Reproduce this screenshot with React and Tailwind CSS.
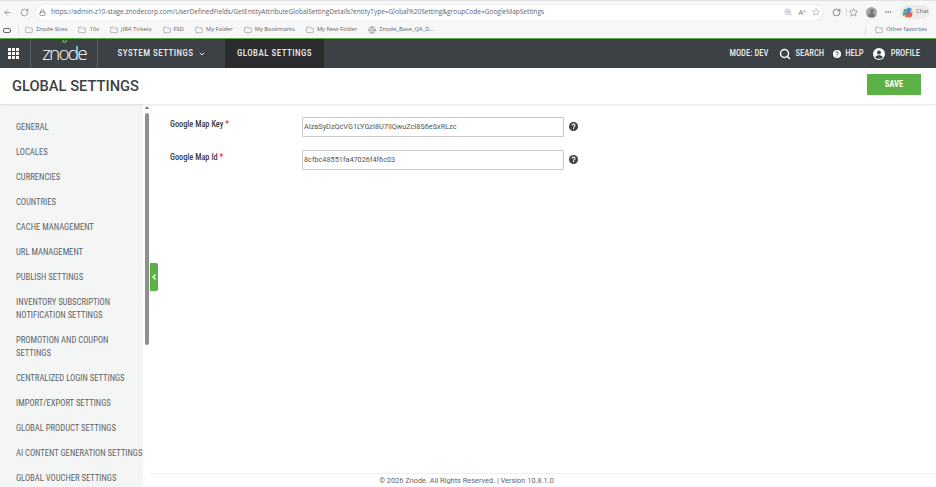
import React from 'react';
import { ArrowLeft, RotateCw, Lock, Folder, Globe, ZoomIn, Star, ChevronDown, ChevronLeft, Search, MoreHorizontal } from 'lucide-react';

const bookmarks = ['Znode Sites', '10x', 'JIRA Tickets', 'FSD', 'My Folder', 'My Bookmarks', 'My New Folder'];

const menu = [
  { label: 'GENERAL', h: 'h-[25px]' },
  { label: 'LOCALES', h: 'h-[25px]' },
  { label: 'CURRENCIES', h: 'h-[25px]' },
  { label: 'COUNTRIES', h: 'h-[25px]' },
  { label: 'CACHE MANAGEMENT', h: 'h-[25px]' },
  { label: 'URL MANAGEMENT', h: 'h-[25px]' },
  { label: 'PUBLISH SETTINGS', h: 'h-[25px]' },
  { label: 'INVENTORY SUBSCRIPTION NOTIFICATION SETTINGS', h: 'h-[38px]' },
  { label: 'PROMOTION AND COUPON SETTINGS', h: 'h-[38px]' },
  { label: 'CENTRALIZED LOGIN SETTINGS', h: 'h-[25px]' },
  { label: 'IMPORT/EXPORT SETTINGS', h: 'h-[25px]' },
  { label: 'GLOBAL PRODUCT SETTINGS', h: 'h-[25px]' },
  { label: 'AI CONTENT GENERATION SETTINGS', h: 'h-[25px]' },
  { label: 'GLOBAL VOUCHER SETTINGS', h: 'h-[25px]' },
];

const fields = [
  { label: 'Google Map Key', value: 'AIzaSyDzQcVG1LYGzI8U7IlQwuZcI8S6eSxRLzc' },
  { label: 'Google Map Id', value: '8cfbc48551fa47026f4f6c03' },
];

const HelpDot = ({ className, mark }) => (
  <svg viewBox="0 0 16 16" className={className}>
    <circle cx="8" cy="8" r="8" fill="currentColor" />
    <path d="M5.4 6.2a2.6 2.4 0 1 1 3.9 2.1c-.9.5-1.3.9-1.3 1.7" fill="none" stroke={mark} strokeWidth="1.9" />
    <rect x="7" y="11" width="2" height="2" fill={mark} />
  </svg>
);

const ProfileDot = ({ className }) => (
  <svg viewBox="0 0 16 16" className={className}>
    <circle cx="8" cy="8" r="8" fill="currentColor" />
    <circle cx="8" cy="6" r="2.6" fill="#3c4145" />
    <path d="M3 12.2c1-2 3-2.7 5-2.7s4 .7 5 2.7C12 13.6 10 14.4 8 14.4s-4-.8-5-2.2z" fill="#3c4145" />
  </svg>
);

const GridIcon = () => (
  <svg viewBox="0 0 11 11" className="mr-[4px] h-[11px] w-[11px]" fill="#fff">
    {[0, 4, 8].map((y) =>
      [0, 4, 8].map((x) => <rect key={`${x}-${y}`} x={x} y={y} width="3" height="3" />)
    )}
  </svg>
);

const ZnodeLogo = () => (
  <span className="relative block font-['Open_Sans',sans-serif] text-[19px] font-light font-stretch-[100%] leading-none tracking-[-1.8px] text-white">
    zn
    <span className="relative">
      o
      <svg viewBox="0 0 8 6" className="absolute left-[3px] top-[-1px] h-[5px] w-[7px]">
        <path d="M1 1c2 0 3 1 3 4 0-2 1-4 3-4 0 2-1 4-3 4C2 5 1 3 1 1z" fill="#5cb341" />
      </svg>
    </span>
    de
  </span>
);

const CopilotDot = () => (
  <svg viewBox="0 0 16 16" className="h-[11px] w-[11px]">
    <path d="M8 1h4a3 3 0 0 1 2 3L11 9 6 6z" fill="#4a8fe0" />
    <path d="M3 3h5L5 12l-3 1a2 2 0 0 1-1-2z" fill="#3fb98a" />
    <path d="M5 9h6l4-3v5a4 4 0 0 1-4 4H5z" fill="#e8663c" />
    <path d="M8 6h3l-1 5H5z" fill="#b04fc4" />
  </svg>
);

export default function App() {
  return (
    <div className="flex h-[487px] w-[936px] flex-col overflow-hidden bg-white font-['Roboto',sans-serif]">
      {/* Barre du navigateur */}
      <div className="flex h-[22px] shrink-0 items-center border-t border-[#e2e2e2] bg-[#f7f7f7] pl-[2px] pr-[6px] pt-[1px] text-[#5f6368]">
        <ArrowLeft className="ml-[1px] h-[9px] w-[9px]" strokeWidth={1.5} />
        <RotateCw className="ml-[8px] h-[9px] w-[9px]" strokeWidth={1.5} />
        <div className="ml-[6px] flex h-[15px] w-[788px] items-center rounded-full bg-white pl-[4px] pr-[3px] shadow-[0_0_1px_rgba(0,0,0,0.25)]">
          <Lock className="h-[7px] w-[7px]" strokeWidth={2} />
          <span className="ml-[5px] font-['Open_Sans',sans-serif] text-[6.56px] leading-none whitespace-nowrap text-[#5f6570]">
            https://admin-z10-stage.znodecorp.com/UserDefinedFields/GetEntityAttributeGlobalSettingDetails?entityType=Global%20Setting&groupCode=GoogleMapSettings
          </span>
          <div className="ml-auto flex items-center gap-[6px] text-[#777]">
            <ZoomIn className="h-[8px] w-[8px]" strokeWidth={1.3} />
            <span className="font-['Open_Sans',sans-serif] text-[7px] leading-none">Aᴬ</span>
            <Star className="h-[8px] w-[8px]" strokeWidth={1.3} />
          </div>
        </div>
        <RotateCw className="ml-[9px] h-[9px] w-[9px]" strokeWidth={2} />
        <span className="ml-[5px] h-[8px] w-px bg-[#ddd]" />
        <Star className="ml-[2px] h-[9px] w-[9px]" strokeWidth={1.5} />
        <span className="relative ml-[8px] h-[11px] w-[11px] rounded-full bg-[#a8a8a8]">
          <span className="absolute left-[3.5px] top-[2px] h-[4px] w-[4px] rounded-full bg-[#777]" />
          <span className="absolute left-[2px] top-[6.5px] h-[3.5px] w-[7px] rounded-t-full bg-[#777]" />
        </span>
        <MoreHorizontal className="ml-[7px] h-[8px] w-[8px]" strokeWidth={2} />
        <div className="ml-[8px] flex h-[14px] w-[30px] items-center gap-[3px] rounded-full bg-[#ececec] pl-[2px]">
          <CopilotDot />
          <span className="font-['Open_Sans',sans-serif] text-[5.8px] leading-none">Chat</span>
        </div>
      </div>

      {/* Favoris */}
      <div className="flex h-[16px] shrink-0 items-center bg-[#f7f7f7] pl-[3px] pr-[9px] font-['Open_Sans',sans-serif] text-[5.8px] font-stretch-[90%] leading-none text-[#5f6368]">
        <span className="h-[5px] w-[8px] rounded-[2px] border border-[#666]" />
        <span className="ml-[7px] mr-[6px] h-[8px] w-px bg-[#ddd]" />
        <div className="flex items-center gap-[11px]">
          {bookmarks.map((b) => (
            <span key={b} className="flex items-center gap-[3px] whitespace-nowrap">
              <Folder className="h-[8px] w-[8px]" strokeWidth={1.3} />
              {b}
            </span>
          ))}
          <span className="flex items-center gap-[3px] whitespace-nowrap">
            <Globe className="h-[8px] w-[8px]" strokeWidth={1.3} />
            Znode_Base_QA_D...
          </span>
        </div>
        <span className="ml-auto mr-[9px] h-[8px] w-px bg-[#ddd]" />
        <span className="flex items-center gap-[3px] whitespace-nowrap">
          <Folder className="h-[8px] w-[8px]" strokeWidth={1.3} />
          Other favorites
        </span>
      </div>

      {/* En-tête de l'application */}
      <header className="flex h-[30px] shrink-0 items-stretch border-t border-[#5cab45] bg-[#3c4145] text-[9px] font-medium font-stretch-[85%] text-[#e8e8e8]">
        <div className="flex w-[31px] items-center justify-center border-r border-[#5a5f63]">
          <GridIcon />
        </div>
        <div className="flex w-[67px] items-center justify-center border-r border-[#5a5f63]">
          <ZnodeLogo />
        </div>
        <div className="flex w-[127px] items-center justify-center gap-[4px] tracking-[0.45px]">
          SYSTEM SETTINGS
          <ChevronDown className="h-[8px] w-[8px]" strokeWidth={3} />
        </div>
        <div className="flex w-[99px] items-center justify-center bg-[#2a2c2e] tracking-[0.45px]">GLOBAL SETTINGS</div>
        <div className="ml-auto flex items-center pr-[16px] text-[8.6px]">
          <span>MODE: DEV</span>
          <Search className="ml-[11px] h-[12px] w-[12px] text-white" strokeWidth={3} />
          <span className="ml-[4px]">SEARCH</span>
          <HelpDot className="ml-[9px] h-[8px] w-[8px] text-white" mark="#3c4145" />
          <span className="ml-[4px]">HELP</span>
          <ProfileDot className="ml-[9px] h-[12px] w-[12px] text-white" />
          <span className="ml-[6px]">PROFILE</span>
        </div>
      </header>

      {/* Titre de la page */}
      <div className="z-10 flex h-[36px] shrink-0 items-center justify-between bg-white pl-[12px] pr-[15px] shadow-[0_1px_2px_rgba(0,0,0,0.1)]">
        <h1 className="text-[14.7px] font-medium leading-none text-[#3c4145]">GLOBAL SETTINGS</h1>
        <button className="mb-[3px] h-[21px] w-[54px] bg-[#5cb146] text-[8.5px] font-bold font-stretch-[85%] text-white">SAVE</button>
      </div>

      <div className="flex min-h-0 flex-1">
        {/* Menu latéral */}
        <aside className="w-[143px] shrink-0 overflow-hidden bg-[#f4f6f6] pl-[16px] pt-[10.5px] text-[8.6px] font-stretch-[87%] leading-[13px] text-[#5d6266]">
          {menu.map((m) => (
            <div key={m.label} className={`flex items-center ${m.h}`}>
              <span className="block">{m.label}</span>
            </div>
          ))}
        </aside>

        <div className="relative w-[7px] shrink-0">
          <div className="mx-auto mt-[2px] h-0 w-0 border-x-[2px] border-b-[3px] border-x-transparent border-b-[#777]" />
          <div className="mx-auto mt-[4px] h-[232px] w-[4px] rounded-full bg-[#8d8f91]" />
          <button className="absolute left-[7px] top-[159px] flex h-[28px] w-[8px] items-center justify-center rounded-r-[2px] bg-[#5cb146]">
            <ChevronLeft className="h-[10px] w-[10px] text-white" strokeWidth={4.5} />
          </button>
        </div>

        {/* Formulaire */}
        <main className="flex min-w-0 flex-1 flex-col">
          <div className="flex-1 pl-[20px] pt-[13px]">
            {fields.map((f) => (
              <div key={f.label} className="mb-[13px] flex">
                <label className="w-[132px] pt-[1px] text-[8.3px] font-medium font-stretch-[87%] leading-[12px] text-[#3c4145]">
                  {f.label} <span className="text-[#e23b3b]">*</span>
                </label>
                <div className="flex h-[20px] w-[262px] items-center rounded-[1px] border border-[#c8c8c8] pl-[1px] text-[7.3px] text-[#555]">
                  {f.value}
                </div>
                <HelpDot className="ml-[5px] mt-[5px] h-[9px] w-[9px] text-[#3c4145]" mark="#fff" />
              </div>
            ))}
          </div>
          <footer className="flex h-[14px] shrink-0 items-center justify-center border-t border-[#eeeeee] pr-[153px] text-[7.4px] text-[#666]">
            © 2026 Znode. All Rights Reserved. | Version 10.8.1.0
          </footer>
        </main>
      </div>
    </div>
  );
}
